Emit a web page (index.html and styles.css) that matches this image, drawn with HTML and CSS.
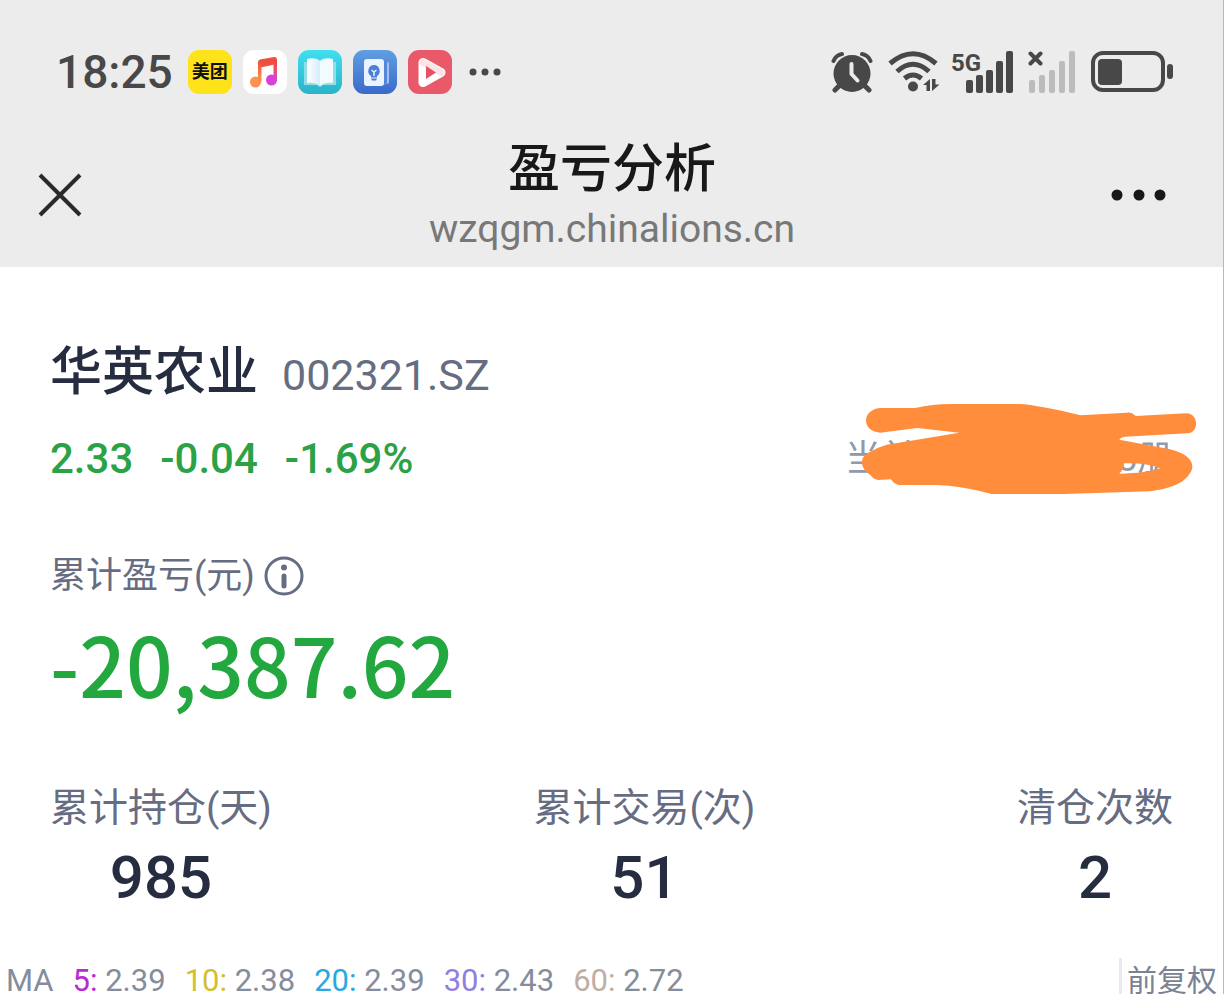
FILE: index.html
```
<!DOCTYPE html>
<html lang="zh">
<head>
    <meta charset="UTF-8">
    <meta name="viewport" content="width=device-width, initial-scale=1.0">
    <title>盈亏分析</title>
    <link rel="stylesheet" href="styles.css">
</head>
<body>
    <header class="top">
        <div class="status-bar">
            <div class="status-left">
                <span class="time">18:25</span>
                <span class="app app-meituan">美团</span>
                <svg class="app" viewBox="0 0 44 44">
                    <defs>
                        <linearGradient id="note" x1="0" y1="0" x2="0" y2="1">
                            <stop offset="0" stop-color="#f4453f"/>
                            <stop offset="0.5" stop-color="#f0506a"/>
                            <stop offset="1" stop-color="#c840e8"/>
                        </linearGradient>
                        <linearGradient id="noteLeft" x1="0" y1="0" x2="0" y2="1">
                            <stop offset="0" stop-color="#f0503c"/>
                            <stop offset="1" stop-color="#ff9c48"/>
                        </linearGradient>
                    </defs>
                    <rect width="44" height="44" rx="11" fill="#fff"/>
                    <path d="M15 12q0-2 2-2.500l14-2.500q3-.4 3 2.500v4.500l-19 4z" fill="#ee5040"/>
                    <path d="M15 12h3.500v20h-3.500z" fill="url(#noteLeft)"/>
                    <path d="M30.500 10h3.500v21h-3.500z" fill="url(#note)"/>
                    <circle cx="12.500" cy="32" r="5.500" fill="#fd9150"/>
                    <circle cx="28.500" cy="30" r="5.500" fill="#d742d5"/>
                </svg>
                <svg class="app" viewBox="0 0 44 44">
                    <defs>
                        <linearGradient id="cyan" x1="0" y1="0" x2="0" y2="1">
                            <stop offset="0" stop-color="#3fdff0"/>
                            <stop offset="1" stop-color="#2bb3c8"/>
                        </linearGradient>
                        <linearGradient id="page" x1="0" y1="0" x2="1" y2="0">
                            <stop offset="0" stop-color="#fff"/>
                            <stop offset="1" stop-color="#d4eefa"/>
                        </linearGradient>
                    </defs>
                    <rect width="44" height="44" rx="11" fill="url(#cyan)"/>
                    <path d="M6 12h32v23H25l-3 2-3-2H6z" fill="#8fdeea"/>
                    <path d="M9 9q9-2 13 2v25q-5-4-13-3z" fill="url(#page)"/>
                    <path d="M35 9q-9-2-13 2v25q5-4 13-3z" fill="#f2fbff"/>
                </svg>
                <svg class="app" viewBox="0 0 44 44">
                    <defs>
                        <linearGradient id="blue" x1="0" y1="0" x2="0" y2="1">
                            <stop offset="0" stop-color="#5f9fe2"/>
                            <stop offset="1" stop-color="#3b69cb"/>
                        </linearGradient>
                    </defs>
                    <rect width="44" height="44" rx="11" fill="url(#blue)"/>
                    <rect x="24" y="12" width="12" height="22" rx="2" fill="#9fc2f2"/>
                    <rect x="20" y="10" width="14" height="25" rx="2" fill="#5587d8"/>
                    <rect x="11" y="9" width="20" height="27" rx="3" fill="#eaf3fe"/>
                    <path d="M21 15a6 6 0 0 1 3 11v1.500h-6V26a6 6 0 0 1 3-11z" fill="#4a7fd6"/>
                    <path d="M18 28.500h6l-1 2h-4z" fill="#4a7fd6"/>
                    <path d="M18.500 20l2.500 2 2.500-2M21 22v4" stroke="#eaf3fe" stroke-width="1.500" fill="none"/>
                </svg>
                <svg class="app" viewBox="0 0 44 44">
                    <rect width="44" height="44" rx="11" fill="#e9596a"/>
                    <path d="M15 12.500v20L33 22.500z" fill="#fff" stroke="#fff" stroke-width="9" stroke-linejoin="round"/>
                    <path d="M15 12.500L33 22.500" stroke="#fde3e5" stroke-width="7" stroke-linecap="round"/>
                    <path d="M18 16v13l10-6.500z" fill="#e75263"/>
                </svg>
                <svg class="more-small" viewBox="0 0 32 8">
                    <circle cx="4" cy="4" r="3.500"/>
                    <circle cx="16" cy="4" r="3.500"/>
                    <circle cx="28" cy="4" r="3.500"/>
                </svg>
            </div>
            <div class="status-right">
                <svg width="42" height="42" viewBox="0 0 42 42">
                    <circle cx="21" cy="22.500" r="18.500" fill="#484848"/>
                    <path d="M2.500 10Q5 4 11 3M31 3q6 1 8.500 7" stroke="#484848" stroke-width="4" stroke-linecap="round" fill="none"/>
                    <path d="M8 35l-4 4M34 35l4 4" stroke="#484848" stroke-width="5" stroke-linecap="round"/>
                    <path d="M20.500 13v10l6 6.500" stroke="#ececec" stroke-width="4" stroke-linecap="round" stroke-linejoin="round" fill="none"/>
                </svg>
                <svg width="52" height="42" viewBox="0 0 52 42">
                    <g stroke="#484848" stroke-width="5" fill="none">
                        <path d="M2 12.500Q25-7 48 12.500"/>
                        <path d="M9 20.500Q25 6 41 20.500"/>
                        <path d="M16.500 27.500q8.500-7 17 0"/>
                    </g>
                    <circle cx="25" cy="35.500" r="5" fill="#484848"/>
                    <path d="M42 28v12h-3.500v-6H35zM44 28v12l7.500-6.500H47.500V28z" fill="#484848"/>
                </svg>
                <div class="signal">
                    <span class="signal-label">5G</span>
                    <svg width="48" height="42" viewBox="0 0 48 42" fill="#484848">
                        <rect x="1" y="29" width="7" height="13" rx="2"/>
                        <rect x="11" y="24" width="7" height="18" rx="2"/>
                        <rect x="21" y="19" width="7" height="23" rx="2"/>
                        <rect x="31" y="10" width="7" height="32" rx="2"/>
                        <rect x="41" y="0" width="7" height="42" rx="2"/>
                    </svg>
                </div>
                <svg width="48" height="42" viewBox="0 0 48 42">
                    <path d="M2.500 2.500l10 10M12.500 2.500l-10 10" stroke="#484848" stroke-width="4" stroke-linecap="round"/>
                    <g fill="#bcbcbc">
                        <rect x="1" y="29" width="6" height="13" rx="2"/>
                        <rect x="11" y="24" width="6" height="18" rx="2"/>
                        <rect x="21" y="19" width="6" height="23" rx="2"/>
                        <rect x="31" y="10" width="6" height="32" rx="2"/>
                        <rect x="41" y="0" width="6" height="42" rx="2"/>
                    </g>
                </svg>
                <svg width="82" height="42" viewBox="0 0 82 42">
                    <rect x="2" y="2" width="70" height="37" rx="10" fill="none" stroke="#484848" stroke-width="4"/>
                    <rect x="7" y="8" width="24" height="26" rx="4" fill="#484848"/>
                    <rect x="76" y="13" width="6" height="15" rx="3" fill="#484848"/>
                </svg>
            </div>
        </div>
        <nav class="nav-bar">
            <button class="nav-btn nav-close" type="button" aria-label="关闭">
                <svg width="44" height="44" viewBox="0 0 44 44">
                    <path d="M2 2l40 40M42 2L2 42" stroke="#2a2a2a" stroke-width="4"/>
                </svg>
            </button>
            <div class="nav-title">
                <h1>盈亏分析</h1>
                <p>wzqgm.chinalions.cn</p>
            </div>
            <button class="nav-btn" type="button" aria-label="更多">
                <svg width="56" height="12" viewBox="0 0 56 12" fill="#181818">
                    <circle cx="7" cy="6" r="5.500"/>
                    <circle cx="29" cy="6" r="5.500"/>
                    <circle cx="50" cy="6" r="5.500"/>
                </svg>
            </button>
        </nav>
    </header>

    <main class="content">
        <section class="stock">
            <div class="stock-info">
                <div class="stock-name">
                    <h2>华英农业</h2>
                    <span class="code">002321.SZ</span>
                </div>
                <div class="quote">
                    <b>2.33</b>
                    <span>-0.04</span>
                    <span>-1.69%</span>
                </div>
            </div>
            <div class="account">
                <span>当前</span>
                <span>5册</span>
                <!-- 涂抹遮挡 -->
                <svg class="scribble" viewBox="0 0 1182 360">
                    <path fill="#ff8d3c" fill-rule="evenodd" d="M150 54H255Q310 42 360 42H570Q620 44 752 76L890 68Q905 66 917 78L1070 70C1106 72 1108 126 1074 130L885 140Q872 142 868 149L1020 178C1070 190 1092 212 1086 238C1070 280 1020 296 960 304L700 312H485Q390 286 320 285H205Q190 280 182 268L145 270Q130 268 122 256C90 235 88 205 112 190Q140 172 170 164L388 128L262 114L150 128C94 124 94 60 150 54ZM882 220Q950 218 990 235Q950 250 868 251Q882 238 882 220Z"/>
                </svg>
            </div>
        </section>

        <section class="profit">
            <div class="label">
                累计盈亏(元)
                <svg width="40" height="40" viewBox="0 0 40 40">
                    <circle cx="20" cy="20" r="18" fill="none" stroke="#666d82" stroke-width="3"/>
                    <circle cx="20" cy="11.500" r="3" fill="#666d82"/>
                    <path d="M20 20v10" stroke="#666d82" stroke-width="5" stroke-linecap="round"/>
                </svg>
            </div>
            <div class="amount">-20,387.62</div>
        </section>

        <section class="stats">
            <div class="stat">
                <span>累计持仓(天)</span>
                <b>985</b>
            </div>
            <div class="stat">
                <span>累计交易(次)</span>
                <b>51</b>
            </div>
            <div class="stat">
                <span>清仓次数</span>
                <b>2</b>
            </div>
        </section>
    </main>

    <footer class="ma-bar">
        <div class="ma-list">
            <span>MA</span>
            <span><i class="ma5">5:</i> 2.39</span>
            <span><i class="ma10">10:</i> 2.38</span>
            <span><i class="ma20">20:</i> 2.39</span>
            <span><i class="ma30">30:</i> 2.43</span>
            <span><i class="ma60">60:</i> 2.72</span>
        </div>
        <button class="adjust" type="button">前复权</button>
    </footer>
</body>
</html>
```

FILE: styles.css
```
* {
    box-sizing: border-box;
    margin: 0;
    padding: 0;
}
body {
    font-family: Roboto, "Noto Sans CJK SC", sans-serif;
    background-color: #fff;
    color: #262d40;
    border-right: 1px solid #b8b8b8;
}
button {
    border: none;
    background: none;
    font-family: inherit;
    cursor: pointer;
}
svg {
    display: block;
    flex-shrink: 0;
}
.top {
    background-color: #ececec;
    padding-bottom: 13px;
}
.status-bar {
    display: flex;
    justify-content: space-between;
    align-items: center;
    padding: 44px 50px 0 56px;
}
.status-left {
    display: flex;
    align-items: center;
    gap: 11px;
}
.time {
    margin-right: 4px;
    font-size: 46px;
    line-height: 56px;
    font-weight: 500;
    color: #484848;
}
.app {
    width: 44px;
    height: 44px;
}
.app-meituan {
    border-radius: 11px;
    background-color: #ffe31a;
    color: #111;
    font-size: 18px;
    line-height: 44px;
    font-weight: bold;
    text-align: center;
}
.more-small {
    width: 32px;
    margin-left: 6px;
    fill: #484848;
}
.status-right {
    display: flex;
    align-items: center;
    gap: 15px;
}
.signal {
    position: relative;
    margin-left: -4px;
    padding-left: 14px;
}
.signal-label {
    position: absolute;
    top: 0;
    left: 0;
    font-size: 24px;
    line-height: 24px;
    font-weight: bold;
    color: #484848;
}
.nav-bar {
    display: flex;
    justify-content: space-between;
    align-items: center;
    padding: 36px 57px 0 38px;
}
.nav-btn {
    width: 56px;
}
.nav-close {
    width: 76px;
}
.nav-title {
    text-align: center;
}
.nav-title h1 {
    font-size: 52px;
    line-height: 68px;
    font-weight: 500;
    color: #181818;
}
.nav-title p {
    font-size: 39px;
    line-height: 50px;
    color: #787878;
}
.content {
    padding: 70px 50px 0;
}
.stock {
    display: flex;
    justify-content: space-between;
    align-items: flex-end;
}
.stock-name {
    display: flex;
    align-items: baseline;
    gap: 24px;
}
.stock-name h2 {
    font-size: 52px;
    line-height: 72px;
    font-weight: 500;
}
.code {
    font-size: 43px;
    color: #666d82;
}
.quote {
    display: flex;
    gap: 27px;
    margin-top: 24px;
    font-size: 42px;
    line-height: 52px;
    font-weight: 500;
    color: #2ba245;
}
.quote b {
    font-weight: 500;
}
.account {
    position: relative;
    display: flex;
    justify-content: space-between;
    width: 328px;
    font-size: 36px;
    line-height: 52px;
    color: #9299aa;
}
.scribble {
    position: absolute;
    left: -15px;
    bottom: -25px;
    width: 394px;
    height: 120px;
}
.profit {
    margin-top: 63px;
}
.label {
    display: flex;
    align-items: center;
    gap: 9px;
    font-size: 36px;
    line-height: 56px;
    color: #666d82;
}
.amount {
    margin-top: 9px;
    font-family: "Noto Sans CJK SC", sans-serif;
    font-size: 82px;
    line-height: 100px;
    font-weight: 500;
    color: #22a83f;
}
.stats {
    display: flex;
    justify-content: space-between;
    margin-top: 67px;
}
.stat {
    display: flex;
    flex-direction: column;
    align-items: center;
}
.stat span {
    font-size: 39px;
    line-height: 56px;
    color: #666d82;
}
.stat b {
    font-size: 60px;
    line-height: 84px;
    font-weight: 500;
}
.ma-bar {
    display: flex;
    justify-content: space-between;
    align-items: flex-end;
    margin-top: 38px;
    padding: 0 6px;
    color: #858d9d;
}
.ma-list {
    display: flex;
    gap: 19px;
    font-size: 31px;
    line-height: 26px;
}
.ma-list i {
    font-style: normal;
}
.ma5 { color: #b82bd0; }
.ma10 { color: #d3bf30; }
.ma20 { color: #2aa9e0; }
.ma30 { color: #8f7fe0; }
.ma60 { color: #bfaea5; }
.adjust {
    padding: 10px 0 0 5px;
    border-left: 3px solid #e8eaef;
    font-size: 30px;
    line-height: 26px;
    color: #7b8293;
}
```
